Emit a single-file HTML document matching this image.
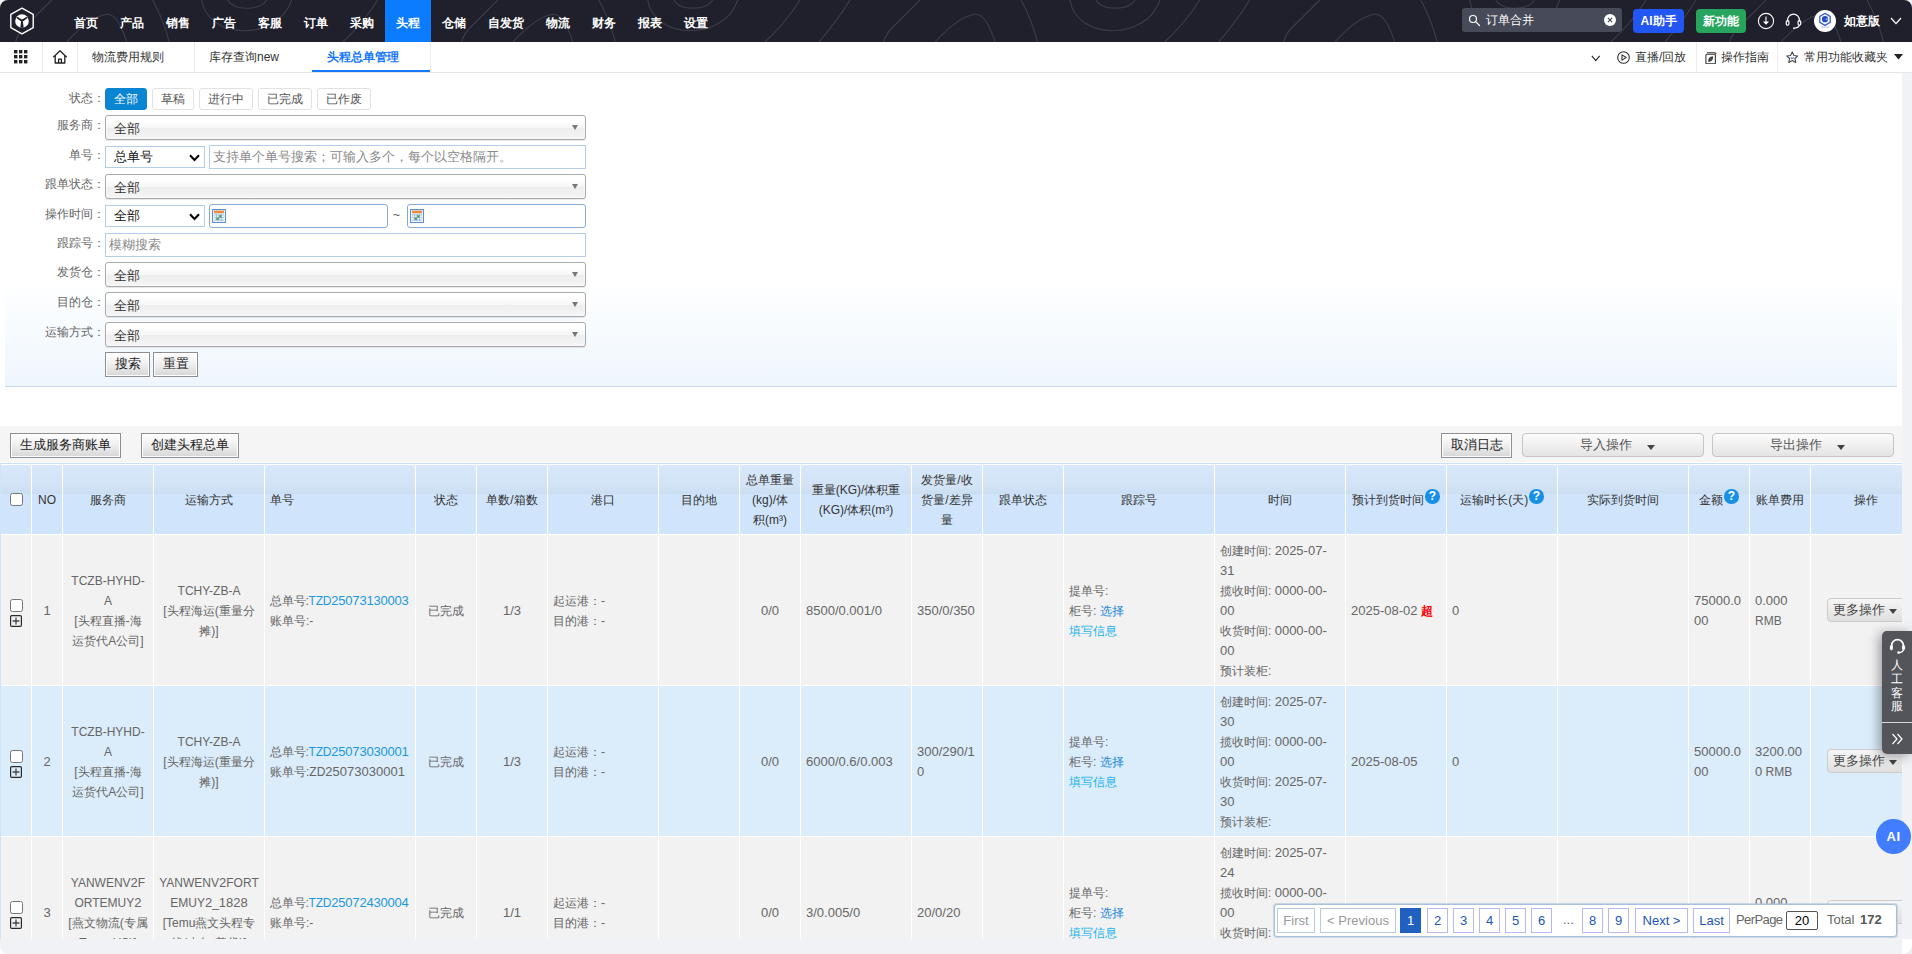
<!DOCTYPE html>
<html lang="zh">
<head>
<meta charset="utf-8">
<title>头程总单管理</title>
<style>
*{box-sizing:border-box;margin:0;padding:0}
html,body{width:1912px;height:954px;overflow:hidden;background:#fff}
body{font-family:"Liberation Sans",sans-serif;font-size:12px;color:#333;position:relative}
.abs{position:absolute}
/* ---------- top nav ---------- */
#nav{position:absolute;left:0;top:0;width:1912px;height:42px;background:#1f202b;overflow:hidden}
#nav .deco{position:absolute;left:0;top:0}
#nav .item{position:absolute;top:0;height:42px;line-height:46px;text-align:center;color:#fff;font-weight:bold;font-size:12px;white-space:nowrap}
#nav .item.on{background:#0b7bff}
#search{position:absolute;left:1462px;top:8px;width:160px;height:24px;background:#474b59;border-radius:3px;color:#fff;font-size:12px;line-height:24px;padding-left:24px}
.nbtn{position:absolute;top:9px;height:24px;line-height:24px;border-radius:4px;color:#fff;font-weight:bold;font-size:12px;text-align:center}
/* ---------- tab bar ---------- */
#tabs{position:absolute;left:0;top:42px;width:1912px;height:31px;background:#fff;border-bottom:1px solid #e6e6e6}
#tabs .sep{position:absolute;top:0;width:1px;height:30px;background:#ececec}
#tabs .tab{position:absolute;top:0;height:30px;line-height:31px;font-size:12px;color:#333;white-space:nowrap}
#tabs .tab.on{color:#1677ff;font-weight:bold;border-bottom:2px solid #1677ff}
#tabs .rt{position:absolute;top:0;height:30px;line-height:31px;font-size:12px;color:#333;white-space:nowrap}
/* ---------- filter ---------- */
#filter{position:absolute;left:5px;top:73px;width:1892px;height:314px;background:linear-gradient(#fff 0,#fff 66%,#eef6fd 100%);border-bottom:1px solid #c6d9ea}
.lab{position:absolute;left:0;width:105px;text-align:right;font-size:12px;color:#666;height:20px;line-height:20px;white-space:nowrap}
.tofu .lab{width:102px}
.sbtn{position:absolute;top:88px;height:22px;line-height:20px;border:1px solid #e2e2e2;border-radius:3px;background:#fff;color:#555;font-size:12px;text-align:center}
.sbtn.on{background:#0a85d1;border-color:#0a85d1;color:#fff}
.chosen{position:absolute;left:105px;width:481px;height:25px;border:1px solid #aaa;border-radius:3px;background:linear-gradient(#fff 20%,#f6f6f6 50%,#eee 52%,#f4f4f4 100%);box-shadow:0 0 3px #fff inset,0 1px 1px rgba(0,0,0,.1);font-size:13px;line-height:25px;padding-left:8px;color:#333}
.chosen:after{content:"";position:absolute;right:7px;top:9px;border-left:3.5px solid transparent;border-right:3.5px solid transparent;border-top:5px solid #777}
.nsel{position:absolute;left:105px;width:100px;height:22px;border:1px solid #b4cdea;background:#fff;font-size:13.33px;line-height:20px;padding-left:8px;color:#111}
.nsel svg{position:absolute;right:4px;top:7px}
.inp{position:absolute;height:24px;border:1px solid #b4cdea;background:#fff;font-size:13.33px;line-height:22px;padding-left:3px;color:#8a8a8a;white-space:nowrap}
.inp.date{border-color:#86abd9;border-radius:3px}
.gbtn{position:absolute;height:25px;line-height:22px;border:1px solid #8f8f8f;background:linear-gradient(#fefefe 0,#f1f1f1 45%,#d6d6d6 100%);color:#222;font-size:13px;text-align:center;box-shadow:inset 0 0 0 1px #fff}

/* ---------- toolbar ---------- */
#toolbar{position:absolute;left:0;top:426px;width:1902px;height:37px;background:#f5f5f5;border-bottom:1px solid #fff}
.ddbtn{position:absolute;top:433px;width:182px;height:24px;border:1px solid #c6c6c6;border-radius:4px;background:linear-gradient(#fcfcfc,#e4e4e4);font-size:13px;color:#555;line-height:22px;white-space:nowrap}
.ddbtn>b{position:absolute;left:57px;top:0;font-weight:normal}
.ddbtn>i{position:absolute;left:124px;top:11px;border-left:4.5px solid transparent;border-right:4.5px solid transparent;border-top:5px solid #444}
/* ---------- grid ---------- */
#gridwrap{position:absolute;left:0;top:463px;width:1902px;height:476px;overflow:hidden;border-top:1px solid #c9dff7;border-left:1px solid #cfe4fa;background:#fff}
table.grid{border-collapse:separate;border-spacing:0;table-layout:fixed;width:1921px;font-family:"Liberation Sans",sans-serif;font-size:12px;line-height:20px;color:#666}
table.grid th{height:71px;padding:5px 5px 4px;border-top:1px solid #fff;border-right:1px solid #fff;border-bottom:1px solid #fff;background:linear-gradient(#d9e8fb 0,#d2e3f6 22px,#cadef2 28.5px,#d0e5fb 29px) no-repeat;background-size:100% 29px;background-color:#d0e5fb;font-weight:normal;color:#333;font-size:12px;line-height:20px;text-align:center;vertical-align:middle;white-space:nowrap;overflow:hidden}
table.grid td{height:151px;padding:6px 5px 4px;border-right:1px solid #fff;border-bottom:1px solid #fff;background:#f2f2f2;text-align:center;vertical-align:middle;font-size:12px;line-height:20px;color:#666;white-space:nowrap;overflow:hidden}
table.grid tr.even td{background:#dbecfa}
table.grid td.l, table.grid th.l{text-align:left}
table.grid a{color:#1b98e0;text-decoration:none}
table.grid a.c2{color:#21b4ee}
table.grid a.c3{color:#1a86de}
.ck{display:block;width:13px;height:13px;border:1px solid #767676;border-radius:2.5px;background:#fff;margin:3px 0 0 4px}
.plus{display:block;width:12px;height:12px;margin:3px 0 0 4px}
.q{display:inline-block;width:14.5px;height:14.5px;border-radius:50%;background:#1890e8;color:#fff;font-size:12px;font-weight:bold;line-height:15px;text-align:center;vertical-align:top;margin-top:-1px;margin-left:1px}
.more{display:block;position:relative;margin-left:11px;margin-top:-2px;width:80px;height:24px;border:1px solid #ccc;border-radius:4px;background:linear-gradient(#f6f6f6,#dfdfdf);font-size:13px;line-height:21px;color:#444;text-align:left;padding-left:5px}
.more i{position:absolute;left:61px;top:10px;border-left:4.5px solid transparent;border-right:4.5px solid transparent;border-top:5px solid #444}
.d{font-size:13px}
.ls{letter-spacing:-0.2px}
/* ---------- pager ---------- */
#pager{position:absolute;left:1274px;top:904px;width:623px;height:33px;background:#fff;border:1px solid #a9c0d8;border-radius:3px;box-shadow:0 0 0 1px rgba(169,192,216,.55);font-size:13px}
#pager .p{position:absolute;top:3px;height:25px;line-height:23px;border:1px solid #b8b8ee;color:#1b55b5;text-align:center;background:#fff;white-space:nowrap}
#pager .p.dis{color:#999;border-color:#b9c9de}
#pager .p.cur{background:#2060c0;border-color:#2060c0;color:#fff}
#pager .t{position:absolute;top:3px;height:25px;line-height:24px;color:#666;white-space:nowrap}
</style>
</head>
<body>

<!-- ================= NAV ================= -->
<div id="nav">
  <svg class="deco" width="1912" height="42" viewBox="0 0 1912 42" fill="none" stroke="#3c3d49" stroke-width="1.1">
    <defs><g id="tm">
      <path d="M-176 0 C -186 16, -198 30, -211 42"/>
      <path d="M-126 0 C -135 15, -146 29, -157 42"/>
      <path d="M-56 0 L -84 28 C -89 33, -91 37, -92 42"/>
      <path d="M-41 42 C -28 28, -14 16, -1 14.2 C 8 13.6, 14 26, 19 42"/>
      <path d="M45 0 C 52 13, 58 28, 61.500 42"/>
      <path d="M94 0 C 100 40, 170 42, 184 0"/>
      <path d="M120 0 C 126 11, 152 11, 159 0"/>
    </g></defs>
    <use href="#tm" x="107.7"/><use href="#tm" x="553.8"/><use href="#tm" x="976"/><use href="#tm" x="1375.7"/><use href="#tm" x="1822"/>
  </svg>
  <!-- logo -->
  <svg class="abs" style="left:9px;top:6px" width="26" height="30" viewBox="0 0 26 30">
    <path d="M13 2.2 L24.2 8.4 V21.6 L13 27.8 L1.8 21.6 V8.4 Z" fill="#1f202b" stroke="#fff" stroke-width="1.4" stroke-linejoin="round"/>
    <circle cx="13" cy="15" r="6.8" fill="#fff"/>
    <path d="M8.2 11.6 L13 14.4 L17.8 11.6 L13 15.2 Z M13 14.6 L13.9 21 L12.1 21 Z" fill="#1f202b" stroke="#1f202b" stroke-width="1.5" stroke-linejoin="round"/>
  </svg>
  <div class="item" style="left:63px;width:46px">首页</div>
  <div class="item" style="left:109px;width:46px">产品</div>
  <div class="item" style="left:155px;width:46px">销售</div>
  <div class="item" style="left:201px;width:46px">广告</div>
  <div class="item" style="left:247px;width:46px">客服</div>
  <div class="item" style="left:293px;width:46px">订单</div>
  <div class="item" style="left:339px;width:46px">采购</div>
  <div class="item on" style="left:385px;width:46px">头程</div>
  <div class="item" style="left:431px;width:46px">仓储</div>
  <div class="item" style="left:477px;width:58px">自发货</div>
  <div class="item" style="left:535px;width:46px">物流</div>
  <div class="item" style="left:581px;width:46px">财务</div>
  <div class="item" style="left:627px;width:46px">报表</div>
  <div class="item" style="left:673px;width:46px">设置</div>

  <div id="search">订单合并
    <svg class="abs" style="left:6px;top:6px" width="13" height="13" viewBox="0 0 13 13" fill="none" stroke="#fff" stroke-width="1.2"><circle cx="5" cy="5" r="3.5"/><path d="M7.8 7.8 L11.5 11.5" stroke-linecap="round"/></svg>
    <svg class="abs" style="left:142px;top:6px" width="12" height="12" viewBox="0 0 12 12"><circle cx="6" cy="6" r="6" fill="#fff"/><path d="M3.9 3.9 L8.1 8.1 M8.1 3.9 L3.9 8.1" stroke="#474b59" stroke-width="1.2"/></svg>
  </div>
  <div class="nbtn" style="left:1633px;width:51px;background:#2156f3">AI助手</div>
  <div class="nbtn" style="left:1696px;width:50px;background:#27a55f">新功能</div>
  <!-- download -->
  <svg class="abs" style="left:1757px;top:12px" width="18" height="18" viewBox="0 0 18 18" fill="none" stroke="#fff" stroke-width="1.1"><circle cx="9" cy="9" r="7.6"/><path d="M9 4.6 V11.6" /><path d="M6 9.4 L9 12.8 L12 9.4 Z" fill="#fff" stroke="none"/></svg>
  <!-- headset -->
  <svg class="abs" style="left:1785px;top:12px" width="17" height="18" viewBox="0 0 17 18" fill="none" stroke="#fff" stroke-width="1.2"><path d="M2.6 9.5 V8 A5.9 5.9 0 0 1 14.4 8 V9.5"/><rect x="1.3" y="8.6" width="2.6" height="4.6" rx="1.2"/><rect x="13.1" y="8.6" width="2.6" height="4.6" rx="1.2"/><path d="M14.4 13.2 C 14 15.2, 12 16, 9.6 16.2" /><circle cx="9" cy="16.2" r="0.9" fill="#fff" stroke="none"/></svg>
  <!-- avatar -->
  <svg class="abs" style="left:1814px;top:10px" width="22" height="22" viewBox="0 0 22 22"><circle cx="11" cy="11" r="11" fill="#fff"/><path d="M11 3.4 L16.2 6.4 V12.4 L11 15.4 L5.8 12.4 V6.4 Z" fill="none" stroke="#3e5fe0" stroke-width="1.3"/><circle cx="11" cy="9.2" r="3.1" fill="#2a49c9"/><path d="M11 9.2 L13.6 7.8 V10.8 Z" fill="#6fb2ff"/><rect x="6.5" y="16.6" width="9" height="1.2" fill="#c9cde0"/></svg>
  <div class="abs" style="left:1844px;top:0;height:42px;line-height:42px;color:#fff;font-weight:bold;font-size:12px;white-space:nowrap">如意版</div>
  <svg class="abs" style="left:1890px;top:17px" width="12" height="8" viewBox="0 0 12 8" fill="none" stroke="#fff" stroke-width="1.3"><path d="M1 1 L6 6.6 L11 1"/></svg>
  <!-- window corners -->
  <svg class="abs" style="left:0;top:0" width="8" height="8" viewBox="0 0 8 8"><path d="M0 0 H8 A8 8 0 0 0 0 8 Z" fill="#f3f3f5"/></svg>
  <svg class="abs" style="left:1904px;top:0" width="8" height="8" viewBox="0 0 8 8"><path d="M8 0 H0 A8 8 0 0 1 8 8 Z" fill="#f3f3f5"/></svg>
</div>

<!-- ================= TAB BAR ================= -->
<div id="tabs">
  <svg class="abs" style="left:14px;top:8px" width="14" height="14" viewBox="0 0 14 14" fill="#222"><rect x="0" y="0" width="3.4" height="3.4"/><rect x="5" y="0" width="3.4" height="3.4"/><rect x="10" y="0" width="3.4" height="3.4"/><rect x="0" y="5" width="3.4" height="3.4"/><rect x="5" y="5" width="3.4" height="3.4"/><rect x="10" y="5" width="3.4" height="3.4"/><rect x="0" y="10" width="3.4" height="3.4"/><rect x="5" y="10" width="3.4" height="3.4"/><rect x="10" y="10" width="3.4" height="3.4"/></svg>
  <div class="sep" style="left:42px"></div>
  <svg class="abs" style="left:52px;top:7px" width="16" height="16" viewBox="0 0 16 16" fill="none" stroke="#222" stroke-width="1.3" stroke-linejoin="round"><path d="M1.3 8.2 L8 1.8 L14.7 8.2"/><path d="M3.2 7 V14 H12.8 V7"/><path d="M6.6 14 V10.2 H9.4 V14"/></svg>
  <div class="sep" style="left:77px"></div>
  <div class="tab" style="left:78px;width:116px;padding-left:14px">物流费用规则</div>
  <div class="sep" style="left:194px"></div>
  <div class="tab" style="left:195px;width:117px;padding-left:14px">库存查询new</div>
  <div class="tab on" style="left:312px;width:118px;padding-left:15px">头程总单管理</div>
  <div class="sep" style="left:430px"></div>

  <svg class="abs" style="left:1591px;top:12.500px" width="9.5" height="7" viewBox="0 0 11 8" fill="none" stroke="#222" stroke-width="1.3"><path d="M1 1 L5.5 6.4 L10 1"/></svg>
  <svg class="abs" style="left:1617px;top:9px" width="13" height="13" viewBox="0 0 13 13" fill="none" stroke="#333" stroke-width="1.1"><circle cx="6.5" cy="6.5" r="5.8"/><path d="M5 3.9 L9.2 6.5 L5 9.1 Z" stroke-linejoin="round"/></svg>
  <div class="rt" style="left:1635px">直播/回放</div>
  <div class="sep" style="left:1696px"></div>
  <svg class="abs" style="left:1704.5px;top:9.500px" width="12" height="12.500" viewBox="0 0 13 14" fill="none" stroke="#333" stroke-width="1.2"><rect x="0.8" y="2.6" width="10.6" height="10.6" rx="1"/><path d="M2 0.9 H10.6 C11.6 0.9, 12.2 1.6, 12.2 2.6"/><path d="M4 10.2 L8.2 5.6 M4 10.2 C 5.6 10.6, 8.6 9, 8.2 5.6 C 6 5.4, 3.8 7.8, 4 10.2 Z"/></svg>
  <div class="rt" style="left:1721px">操作指南</div>
  <div class="sep" style="left:1777px"></div>
  <svg class="abs" style="left:1785.5px;top:8.500px" width="12.5" height="12.5" viewBox="0 0 14 14" fill="none" stroke="#444" stroke-width="1.2" stroke-linejoin="round"><path d="M7 1 L8.9 5 L13.2 5.5 L10 8.4 L10.9 12.8 L7 10.6 L3.1 12.8 L4 8.4 L0.8 5.5 L5.1 5 Z"/><path d="M5.2 7.4 C 6 8.4, 8 8.4, 8.8 7.4" stroke="#3a6cf0"/></svg>
  <div class="rt" style="left:1804px">常用功能收藏夹</div>
  <svg class="abs" style="left:1894px;top:12px" width="9" height="6" viewBox="0 0 9 6"><path d="M0 0 H9 L4.5 5.6 Z" fill="#222"/></svg>
</div>

<!-- right strip (scrollbar gutter) -->
<div class="abs" style="left:1902px;top:73px;width:10px;height:881px;background:#f0f2f5"></div>

<!-- ================= FILTER ================= -->
<div id="filter"></div>
<div id="fl" class="abs" style="left:0;top:0">
  <div class="lab" style="top:88px">状态：</div>
  <div class="sbtn on" style="left:105px;width:42px">全部</div>
  <div class="sbtn" style="left:152px;width:42px">草稿</div>
  <div class="sbtn" style="left:199px;width:54px">进行中</div>
  <div class="sbtn" style="left:258px;width:54px">已完成</div>
  <div class="sbtn" style="left:317px;width:54px">已作废</div>

  <div class="lab" style="top:115px">服务商：</div>
  <div class="chosen" style="top:115px">全部</div>

  <div class="lab" style="top:145px">单号：</div>
  <div class="nsel" style="top:146px">总单号<svg width="11" height="8" viewBox="0 0 11 8" fill="none" stroke="#000" stroke-width="2"><path d="M1 1.2 L5.5 6 L10 1.2"/></svg></div>
  <div class="inp" style="left:209px;top:145px;width:377px">支持单个单号搜索；可输入多个，每个以空格隔开。</div>

  <div class="lab" style="top:174px">跟单状态：</div>
  <div class="chosen" style="top:174px">全部</div>

  <div class="lab" style="top:204px">操作时间：</div>
  <div class="nsel" style="top:205px">全部<svg width="11" height="8" viewBox="0 0 11 8" fill="none" stroke="#000" stroke-width="2"><path d="M1 1.2 L5.5 6 L10 1.2"/></svg></div>
  <div class="inp date" style="left:209px;top:204px;width:179px"><svg class="abs" style="left:2px;top:4px" width="14" height="14" viewBox="0 0 14 14"><rect x="0.5" y="0.5" width="13" height="13" fill="#eaf1fb" stroke="#5b8fd6"/><rect x="2" y="1.6" width="10" height="2.6" fill="#f08a3c"/><path d="M2 6 H12 M2 8.5 H12 M2 11 H12 M4.5 4.5 V12 M7 4.5 V12 M9.5 4.5 V12" stroke="#9db7d8" stroke-width="0.8"/><rect x="4.6" y="8.6" width="2.3" height="2.3" fill="#4ba04b"/><rect x="7.2" y="6.2" width="2.3" height="2.3" fill="#4ba04b"/></svg></div>
  <div class="abs" style="left:393px;top:204px;height:24px;line-height:22px;font-size:12px;color:#555">~</div>
  <div class="inp date" style="left:407px;top:204px;width:179px"><svg class="abs" style="left:2px;top:4px" width="14" height="14" viewBox="0 0 14 14"><rect x="0.5" y="0.5" width="13" height="13" fill="#eaf1fb" stroke="#5b8fd6"/><rect x="2" y="1.6" width="10" height="2.6" fill="#f08a3c"/><path d="M2 6 H12 M2 8.5 H12 M2 11 H12 M4.5 4.5 V12 M7 4.5 V12 M9.5 4.5 V12" stroke="#9db7d8" stroke-width="0.8"/><rect x="4.6" y="8.6" width="2.3" height="2.3" fill="#4ba04b"/><rect x="7.2" y="6.2" width="2.3" height="2.3" fill="#4ba04b"/></svg></div>

  <div class="lab" style="top:233px">跟踪号：</div>
  <div class="inp" style="left:105px;top:233px;width:481px">模糊搜索</div>

  <div class="lab" style="top:262px">发货仓：</div>
  <div class="chosen" style="top:262px">全部</div>
  <div class="lab" style="top:292px">目的仓：</div>
  <div class="chosen" style="top:292px">全部</div>
  <div class="lab" style="top:322px">运输方式：</div>
  <div class="chosen" style="top:322px">全部</div>

  <div class="gbtn" style="left:105px;top:352px;width:45px">搜索</div>
  <div class="gbtn" style="left:153px;top:352px;width:45px">重置</div>
</div>

<!-- ================= TOOLBAR ================= -->
<div id="toolbar"></div>
<div class="gbtn" style="left:10px;top:433px;width:111px">生成服务商账单</div>
<div class="gbtn" style="left:141px;top:433px;width:98px">创建头程总单</div>
<div class="gbtn" style="left:1441px;top:433px;width:71px">取消日志</div>
<div class="ddbtn" style="left:1522px"><b>导入操作</b><i></i></div>
<div class="ddbtn" style="left:1712px"><b>导出操作</b><i></i></div>

<!-- ================= GRID ================= -->
<div id="gridwrap">
<table class="grid">
<colgroup><col style="width:31px"><col style="width:31px"><col style="width:91px"><col style="width:111px"><col style="width:151px"><col style="width:61px"><col style="width:71px"><col style="width:111px"><col style="width:81px"><col style="width:61px"><col style="width:111px"><col style="width:71px"><col style="width:81px"><col style="width:151px"><col style="width:131px"><col style="width:101px"><col style="width:111px"><col style="width:131px"><col style="width:61px"><col style="width:61px"><col style="width:111px"></colgroup>
<thead><tr>
<th class="l"><span class="ck" style="margin-top:-2px"></span></th>
<th>NO</th>
<th>服务商</th>
<th>运输方式</th>
<th class="l">单号</th>
<th>状态</th>
<th>单数/箱数</th>
<th>港口</th>
<th>目的地</th>
<th>总单重量<br>(kg)/体<br>积(m³)</th>
<th>重量(KG)/体积重<br>(KG)/体积(m³)</th>
<th>发货量/收<br>货量/差异<br>量</th>
<th>跟单状态</th>
<th>跟踪号</th>
<th>时间</th>
<th>预计到货时间<span class="q">?</span></th>
<th>运输时长(天)<span class="q">?</span></th>
<th>实际到货时间</th>
<th>金额<span class="q">?</span></th>
<th>账单费用</th>
<th>操作</th>
</tr></thead>
<tbody>
<tr class="odd">
<td class="l"><span class="ck"></span><svg class="plus" viewBox="0 0 12 12"><rect x="0.6" y="0.6" width="10.8" height="10.8" rx="1.2" fill="none" stroke="#2a2a2a" stroke-width="1.2"/><path d="M2.6 6 H9.4 M6 2.600 V9.400" stroke="#444" stroke-width="1.3"/></svg></td>
<td><span class="d">1</span></td>
<td>TCZB-HYHD-<br>A<br>[头程直播-海<br>运货代A公司]</td>
<td>TCHY-ZB-A<br>[头程海运(重量分<br>摊)]</td>
<td class="l"><span class="ls">总单号:<a href="#">TZD<span class="d">25073130003</span></a></span><br>账单号:-</td>
<td>已完成</td>
<td><span class="d">1/3</span></td>
<td class="l">起运港：-<br>目的港：-</td>
<td></td>
<td><span class="d">0/0</span></td>
<td class="l"><span class="d">8500/0.001/0</span></td>
<td class="l"><span class="d">350/0/350</span></td>
<td></td>
<td class="l">提单号:<br>柜号: <a class="c3" href="#">选择</a><br><a class="c2" href="#">填写信息</a></td>
<td class="l">创建时间: <span class="d">2025-07-</span><br><span class="d">31</span><br>揽收时间: <span class="d">0000-00-</span><br><span class="d">00</span><br>收货时间: <span class="d">0000-00-</span><br><span class="d">00</span><br>预计装柜:</td>
<td class="l"><span class="d">2025-08-02</span> <b style="color:#f00;font-size:12px">超</b></td>
<td class="l"><span class="d">0</span></td>
<td></td>
<td class="l"><span class="d">75000.0</span><br><span class="d">00</span></td>
<td class="l"><span class="d">0.000</span><br>RMB</td>
<td class="l"><span class="more">更多操作<i></i></span></td>
</tr>
<tr class="even">
<td class="l"><span class="ck"></span><svg class="plus" viewBox="0 0 12 12"><rect x="0.6" y="0.6" width="10.8" height="10.8" rx="1.2" fill="none" stroke="#2a2a2a" stroke-width="1.2"/><path d="M2.6 6 H9.4 M6 2.600 V9.400" stroke="#444" stroke-width="1.3"/></svg></td>
<td><span class="d">2</span></td>
<td>TCZB-HYHD-<br>A<br>[头程直播-海<br>运货代A公司]</td>
<td>TCHY-ZB-A<br>[头程海运(重量分<br>摊)]</td>
<td class="l"><span class="ls">总单号:<a href="#">TZD<span class="d">25073030001</span></a></span><br>账单号:ZD<span class="d">25073030001</span></td>
<td>已完成</td>
<td><span class="d">1/3</span></td>
<td class="l">起运港：-<br>目的港：-</td>
<td></td>
<td><span class="d">0/0</span></td>
<td class="l"><span class="d">6000/0.6/0.003</span></td>
<td class="l"><span class="d">300/290/1</span><br><span class="d">0</span></td>
<td></td>
<td class="l">提单号:<br>柜号: <a class="c3" href="#">选择</a><br><a class="c2" href="#">填写信息</a></td>
<td class="l">创建时间: <span class="d">2025-07-</span><br><span class="d">30</span><br>揽收时间: <span class="d">0000-00-</span><br><span class="d">00</span><br>收货时间: <span class="d">2025-07-</span><br><span class="d">30</span><br>预计装柜:</td>
<td class="l"><span class="d">2025-08-05</span></td>
<td class="l"><span class="d">0</span></td>
<td></td>
<td class="l"><span class="d">50000.0</span><br><span class="d">00</span></td>
<td class="l"><span class="d">3200.00</span><br><span class="d">0</span> RMB</td>
<td class="l"><span class="more">更多操作<i></i></span></td>
</tr>
<tr class="odd">
<td class="l"><span class="ck"></span><svg class="plus" viewBox="0 0 12 12"><rect x="0.6" y="0.6" width="10.8" height="10.8" rx="1.2" fill="none" stroke="#2a2a2a" stroke-width="1.2"/><path d="M2.6 6 H9.4 M6 2.600 V9.400" stroke="#444" stroke-width="1.3"/></svg></td>
<td><span class="d">3</span></td>
<td>YANWENV<span class="d">2</span>F<br>ORTEMUY<span class="d">2</span><br>[燕文物流(专属<br>Temu-US)]</td>
<td>YANWENV<span class="d">2</span>FORT<br>EMUY<span class="d">2</span>_<span class="d">1828</span><br>[Temu燕文头程专<br>线(小包-普货)]</td>
<td class="l"><span class="ls">总单号:<a href="#">TZD<span class="d">25072430004</span></a></span><br>账单号:-</td>
<td>已完成</td>
<td><span class="d">1/1</span></td>
<td class="l">起运港：-<br>目的港：-</td>
<td></td>
<td><span class="d">0/0</span></td>
<td class="l"><span class="d">3/0.005/0</span></td>
<td class="l"><span class="d">20/0/20</span></td>
<td></td>
<td class="l">提单号:<br>柜号: <a class="c3" href="#">选择</a><br><a class="c2" href="#">填写信息</a></td>
<td class="l">创建时间: <span class="d">2025-07-</span><br><span class="d">24</span><br>揽收时间: <span class="d">0000-00-</span><br><span class="d">00</span><br>收货时间: <span class="d">0000-00-</span><br><span class="d">00</span><br>预计装柜:</td>
<td class="l"><span class="d">2025-08-01</span></td>
<td class="l"><span class="d">0</span></td>
<td></td>
<td class="l"><span class="d">100.000</span></td>
<td class="l"><span class="d">0.000</span><br>RMB</td>
<td class="l"><span class="more">更多操作<i></i></span></td>
</tr>
</tbody></table>
</div>
<!-- bottom scrollbar track -->
<div class="abs" style="left:0;top:939px;width:1902px;height:15px;background:#f0f2f5"></div>
<svg class="abs" style="left:1902px;top:939px" width="10" height="15" viewBox="0 0 10 15"><rect width="10" height="15" fill="#fff"/><path d="M10 6 A9 9 0 0 1 1 15 H10 Z" fill="#eeeef2"/></svg>
<svg class="abs" style="left:0;top:946px" width="8" height="8" viewBox="0 0 8 8"><path d="M0 0 A8 8 0 0 0 8 8 H0 Z" fill="#fff"/></svg>

<!-- ================= FLOATING ================= -->
<div id="pager">
  <div class="p dis" style="left:2px;width:38px">First</div>
  <div class="p dis" style="left:45px;width:76px">&lt; Previous</div>
  <div class="p cur" style="left:125px;width:21px">1</div>
  <div class="p" style="left:152px;width:21px">2</div>
  <div class="p" style="left:178px;width:21px">3</div>
  <div class="p" style="left:204px;width:21px">4</div>
  <div class="p" style="left:230px;width:21px">5</div>
  <div class="p" style="left:256px;width:21px">6</div>
  <div class="t" style="left:288px">...</div>
  <div class="p" style="left:307px;width:21px">8</div>
  <div class="p" style="left:333px;width:21px">9</div>
  <div class="p" style="left:360px;width:53px">Next &gt;</div>
  <div class="p" style="left:418px;width:37px">Last</div>
  <div class="t" style="left:461px;letter-spacing:-0.6px">PerPage</div>
  <div class="abs" style="left:511px;top:6px;width:32px;height:19px;border:1px solid #555;border-radius:2px;text-align:center;line-height:17px;color:#000;font-size:13px">20</div>
  <div class="t" style="left:552px">Total</div>
  <div class="t" style="left:585px;font-weight:bold;color:#555">172</div>
</div>

<div class="abs" style="left:1882px;top:631px;width:30px;height:123px;background:#53555a;border-radius:5px 0 0 5px;box-shadow:-3px 2px 12px rgba(0,0,0,.36)">
  <svg class="abs" style="left:7px;top:7px" width="17" height="17" viewBox="0 0 17 17" fill="none" stroke="#fff" stroke-width="1.8"><path d="M2.6 9 V7.6 A5.9 5.9 0 0 1 14.4 7.6 V9"/><rect x="1.4" y="7.6" width="2" height="4.2" rx="1" fill="#fff" stroke-width="1"/><rect x="13.6" y="7.6" width="2" height="4.2" rx="1" fill="#fff" stroke-width="1"/><path d="M14.4 11.6 C 14 13.6, 12 14.4, 10 14.6" stroke-width="1.3"/><circle cx="9.6" cy="14.6" r="1.3" fill="#fff" stroke="none"/></svg>
  <div class="abs" style="left:0;top:28px;width:30px;text-align:center;color:#fff;font-size:12px;line-height:13.8px">人<br>工<br>客<br>服</div>
  <div class="abs" style="left:0;top:91px;width:30px;height:1px;background:#d8d8d8"></div>
  <svg class="abs" style="left:9px;top:102px" width="12" height="12" viewBox="0 0 12 12" fill="none" stroke="#fff" stroke-width="1.2"><path d="M1.5 1 L6 6 L1.5 11 M6.5 1 L11 6 L6.5 11"/></svg>
</div>
<div class="abs" style="left:1876px;top:819px;width:35px;height:35px;border-radius:50%;background:#427dff;color:#fff;font-weight:bold;font-size:13px;line-height:35px;text-align:center;letter-spacing:0.5px">AI</div>

<script>
(function(){try{
var c=document.createElement('canvas').getContext('2d');c.font='100px "Liberation Sans",sans-serif';
var w=c.measureText('\u4e2d').width;if(!(w>0)||w>=99)return;
document.documentElement.className+=' tofu';var gap=(100-w)/100,ls=gap.toFixed(3)+'em',half=(gap/2).toFixed(3)+'em';
var re=/[\u2E80-\u9FFF\uF900-\uFAFF\uFE30-\uFE4F\uFF00-\uFFEF\u3000-\u303F]+/g;
var tw=document.createTreeWalker(document.body,NodeFilter.SHOW_TEXT,null),n,list=[];
while((n=tw.nextNode())){re.lastIndex=0;if(re.test(n.nodeValue))list.push(n);}
list.forEach(function(t){var s=t.nodeValue,f=document.createDocumentFragment(),last=0,m;re.lastIndex=0;
while((m=re.exec(s))){if(m.index>last)f.appendChild(document.createTextNode(s.slice(last,m.index)));
var sp=document.createElement('span');sp.style.letterSpacing=ls;sp.style.marginLeft=half;sp.style.marginRight='-'+half;sp.textContent=m[0];f.appendChild(sp);last=m.index+m[0].length;}
if(last<s.length)f.appendChild(document.createTextNode(s.slice(last)));
t.parentNode.replaceChild(f,t);});
}catch(e){}})();
</script>
</body>
</html>
